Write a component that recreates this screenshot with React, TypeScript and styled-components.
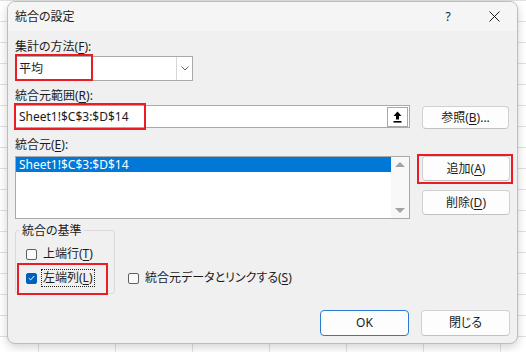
import styled, { createGlobalStyle } from 'styled-components'

const GlobalStyle = createGlobalStyle`
  html, body { margin: 0; padding: 0; }
  body {
    width: 526px;
    height: 352px;
    overflow: hidden;
    background-color: #ffffff;
    background-image:
      linear-gradient(to right, #e1e1e1 1px, transparent 1px),
      linear-gradient(to bottom, #e1e1e1 1px, transparent 1px);
    background-size: 77px 21px;
    background-position: 38px 0;
    font-family: "Noto Sans", "Noto Sans CJK JP", sans-serif;
    font-feature-settings: "palt";
    color: #1b1b1b;
  }
`

const Dialog = styled.div`
  box-sizing: border-box;
  margin: 1px 0 0 7px;
  width: 511px;
  height: 343px;
  background: #f0f0f0;
  border: 1px solid #bdbdbd;
  border-radius: 8px;
  box-shadow: 0 3px 10px rgba(0, 0, 0, 0.18);
  overflow: hidden;
  display: flex;
  flex-direction: column;
`

const TitleBar = styled.div`
  height: 29px;
  flex: none;
  display: flex;
  align-items: center;
  background: #f5f5f5;
  padding-left: 7px;
  font-size: 12px;
`

const Title = styled.div`
  flex: 1;
  line-height: 16px;
`

const Caption = styled.div`
  width: 46px;
  height: 29px;
  display: flex;
  align-items: center;
  justify-content: center;
  font-size: 12px;
`

const Content = styled.div`
  flex: 1;
  display: flex;
  flex-direction: column;
  padding: 0 7px 7px;
`

const Label = styled.div<{ $top: number }>`
  margin-top: ${p => p.$top}px;
  font-size: 12px;
  line-height: 16px;
  white-space: nowrap;
`

const U = styled.span`
  text-decoration: underline;
  text-underline-offset: 2px;
`

const Highlight = styled.div<{ $l: number; $t: number; $w: number; $h: number }>`
  position: absolute;
  left: ${p => p.$l}px;
  top: ${p => p.$t}px;
  width: ${p => p.$w}px;
  height: ${p => p.$h}px;
  box-sizing: border-box;
  border: 2px solid #ec1c24;
  pointer-events: none;
`

const Select = styled.div`
  position: relative;
  box-sizing: border-box;
  margin-top: 1px;
  width: 178px;
  height: 25px;
  background: #fff;
  border: 1px solid #a9a9a9;
  display: flex;
  align-items: center;
  font-size: 12px;
`

const FieldText = styled.span`
  flex: 1;
  padding-left: 3px;
  line-height: 16px;
  white-space: nowrap;
`

const DropButton = styled.div`
  width: 15px;
  height: 100%;
  border-left: 1px solid #d6d6d6;
  display: flex;
  align-items: center;
  justify-content: center;
`

const TwoCols = styled.div<{ $top: number }>`
  margin-top: ${p => p.$top}px;
  display: grid;
  grid-template-columns: 395px 88px;
  column-gap: 12px;
  align-items: start;
`

const RefInput = styled.div`
  position: relative;
  box-sizing: border-box;
  height: 23px;
  background: #fff;
  border: 1px solid #a9a9a9;
  display: flex;
  align-items: center;
  font-size: 12px;
`

const PickButton = styled.div`
  box-sizing: border-box;
  width: 21px;
  height: 20px;
  margin-right: 1px;
  border: 1px solid #a9a9a9;
  background: #fff;
  display: flex;
  align-items: center;
  justify-content: center;
`

const Button = styled.div<{ $h?: number; $w?: number; $default?: boolean }>`
  position: relative;
  box-sizing: border-box;
  height: ${p => p.$h ?? 25}px;
  width: ${p => (p.$w ? `${p.$w}px` : 'auto')};
  background: #fdfdfd;
  border: 1px solid ${p => (p.$default ? '#2a7ad2' : '#d0d0d0')};
  border-bottom-color: ${p => (p.$default ? '#2a7ad2' : '#c2c2c2')};
  border-radius: 4px;
  display: flex;
  align-items: center;
  justify-content: center;
  font-size: 12px;
  line-height: 16px;
  white-space: nowrap;
`

const BrowseButton = styled(Button)`
  margin-top: 1px;
`

const ButtonStack = styled.div`
  display: flex;
  flex-direction: column;
  gap: 9px;
  margin-top: 1px;
`

const ListBox = styled.div`
  box-sizing: border-box;
  margin-top: 1px;
  height: 63px;
  background: #fff;
  border: 1px solid #a9a9a9;
  display: flex;
  font-size: 12px;
`

const ListItems = styled.div`
  flex: 1;
`

const ListItem = styled.div<{ $selected?: boolean }>`
  height: 15px;
  line-height: 15px;
  padding-left: 3px;
  background: ${p => (p.$selected ? '#0078d7' : 'transparent')};
  color: ${p => (p.$selected ? '#fff' : '#1b1b1b')};
`

const ScrollBar = styled.div`
  width: 18px;
  background: #f8f8f8;
  display: flex;
  flex-direction: column;
  justify-content: space-between;
  align-items: center;
  padding: 5px 0;
`

const Arrow = styled.div<{ $down?: boolean }>`
  width: 0;
  height: 0;
  border-left: 5px solid transparent;
  border-right: 5px solid transparent;
  ${p => (p.$down ? 'border-top' : 'border-bottom')}: 5px solid #a3a3a3;
`

const BottomRow = styled.div`
  margin-top: 11px;
  display: flex;
  align-items: flex-end;
`

const Group = styled.div`
  position: relative;
  box-sizing: border-box;
  width: 100px;
  height: 64px;
  border: 1px solid #dadada;
  border-radius: 3px;
  padding: 15px 0 7px;
  display: flex;
  flex-direction: column;
  gap: 8px;
`

const Legend = styled.span`
  position: absolute;
  left: 4px;
  top: -8px;
  padding: 0 2px;
  background: #f0f0f0;
  font-size: 12px;
  line-height: 16px;
  white-space: nowrap;
`

const CheckRow = styled.div<{ $indent?: number }>`
  position: relative;
  display: flex;
  align-items: center;
  height: 16px;
  padding-left: ${p => p.$indent ?? 0}px;
  font-size: 12px;
  white-space: nowrap;
`

const Box = styled.span<{ $checked?: boolean }>`
  box-sizing: border-box;
  width: 11px;
  height: 11px;
  border-radius: 2px;
  border: 1px solid ${p => (p.$checked ? '#005fb8' : '#5f5f5f')};
  background: ${p => (p.$checked ? '#005fb8' : '#fbfbfb')};
  display: flex;
  align-items: center;
  justify-content: center;
  flex: none;
`

const CheckText = styled.span<{ $focus?: boolean }>`
  margin-left: 4px;
  padding: 0 1px;
  line-height: 16px;
  border: 1px ${p => (p.$focus ? 'dotted #222' : 'solid transparent')};
`

const LinkRow = styled(CheckRow)`
  margin: 0 0 8px 13px;
`

const Footer = styled.div`
  margin-top: 16px;
  display: flex;
  justify-content: flex-end;
  gap: 12px;
`

const Check = () => (
  <svg width="7" height="6" viewBox="0 0 7 6">
    <path d="M0.8 3.1 L2.7 4.9 L6.2 1" fill="none" stroke="#fff" strokeWidth="1" />
  </svg>
)

const App = () => (
  <>
    <GlobalStyle />
    <Dialog>
      <TitleBar>
        <Title>統合の設定</Title>
        <Caption>?</Caption>
        <Caption>
          <svg width="11" height="11" viewBox="0 0 11 11">
            <path d="M0.5 0.5 L10.5 10.5 M10.5 0.5 L0.5 10.5" stroke="#1b1b1b" strokeWidth="1" />
          </svg>
        </Caption>
      </TitleBar>
      <Content>
        <Label $top={8}>
          集計の方法(<U>F</U>):
        </Label>
        <Select>
          <FieldText>平均</FieldText>
          <DropButton>
            <svg width="8" height="5" viewBox="0 0 8 5">
              <path d="M0.5 0.5 L4 4 L7.5 0.5" fill="none" stroke="#606060" strokeWidth="1" />
            </svg>
          </DropButton>
          <Highlight $l={-1} $t={-3} $w={78} $h={27} />
        </Select>

        <Label $top={7}>
          統合元範囲(<U>R</U>):
        </Label>
        <TwoCols $top={1}>
          <RefInput>
            <FieldText>Sheet1!$C$3:$D$14</FieldText>
            <PickButton>
              <svg width="9" height="12" viewBox="0 0 9 12">
                <path d="M4.5 0.5 L8.5 5 L6 5 L6 8.5 L3 8.5 L3 5 L0.5 5 Z" fill="#000" />
                <rect x="0.5" y="10" width="8" height="1.6" fill="#000" />
              </svg>
            </PickButton>
            <Highlight $l={-2} $t={-3} $w={132} $h={27} />
          </RefInput>
          <BrowseButton $h={23} $w={87}>
            参照(<U>B</U>)...
          </BrowseButton>
        </TwoCols>

        <Label $top={8}>
          統合元(<U>E</U>):
        </Label>
        <TwoCols $top={2}>
          <ListBox>
            <ListItems>
              <ListItem $selected>Sheet1!$C$3:$D$14</ListItem>
            </ListItems>
            <ScrollBar>
              <Arrow />
              <Arrow $down />
            </ScrollBar>
          </ListBox>
          <ButtonStack>
            <Button>
              追加(<U>A</U>)
              <Highlight $l={-6} $t={-3} $w={96} $h={30} />
            </Button>
            <Button>
              削除(<U>D</U>)
            </Button>
          </ButtonStack>
        </TwoCols>

        <BottomRow>
          <Group>
            <Legend>統合の基準</Legend>
            <CheckRow $indent={10}>
              <Box />
              <CheckText>
                上端行(<U>T</U>)
              </CheckText>
            </CheckRow>
            <CheckRow $indent={10}>
              <Box $checked>
                <Check />
              </Box>
              <CheckText $focus>
                左端列(<U>L</U>)
              </CheckText>
              <Highlight $l={1} $t={-7} $w={91} $h={32} />
            </CheckRow>
          </Group>
          <LinkRow>
            <Box />
            <CheckText>
              統合元データとリンクする(<U>S</U>)
            </CheckText>
          </LinkRow>
        </BottomRow>

        <Footer>
          <Button $h={26} $w={89} $default>
            OK
          </Button>
          <Button $h={26} $w={89}>
            閉じる
          </Button>
        </Footer>
      </Content>
    </Dialog>
  </>
)

export default App
